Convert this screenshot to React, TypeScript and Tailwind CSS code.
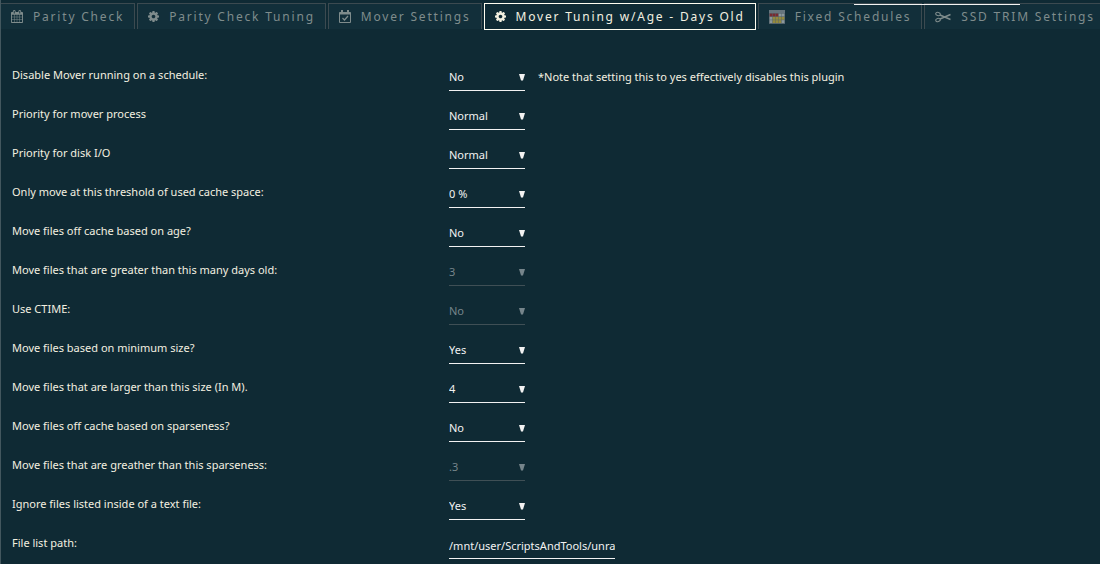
import React from "react";

const cogPath =
  "M1024 896q0-106-75-181t-181-75-181 75-75 181 75 181 181 75 181-75 75-181zm512-109v222q0 12-8 23t-20 13l-185 28q-19 54-39 91 35 50 107 138 10 12 10 25t-9 23q-27 37-99 108t-94 71q-12 0-26-9l-138-108q-44 23-91 38-16 136-29 186-7 28-36 28h-222q-14 0-24.5-8.5t-11.5-21.5l-28-184q-49-16-90-37l-141 107q-10 9-25 9-14 0-25-11-126-114-165-168-7-10-7-23 0-12 8-23 15-21 51-66.5t54-70.5q-27-50-41-99l-183-27q-13-2-21-12.5t-8-23.5v-222q0-12 8-23t19-13l186-28q14-46 39-92-40-57-107-138-10-12-10-24 0-10 9-23 26-36 98.5-107.5t94.5-71.5q13 0 26 10l138 107q44-23 91-38 16-136 29-186 7-28 36-28h222q14 0 24.5 8.5t11.5 21.5l28 184q49 16 90 37l142-107q9-9 24-9 13 0 25 10 129 119 165 170 7 8 7 22 0 12-8 23-15 21-51 66.5t-54 70.5q26 50 41 98l183 28q13 2 21 12.5t8 23.5z";
const calendarPath =
  "M192 1664h288v-288h-288v288zm352 0h320v-288h-320v288zm-352-352h288v-320h-288v320zm352 0h320v-320h-320v320zm-352-384h288v-288h-288v288zm736 736h320v-288h-320v288zm-384-736h320v-288h-320v288zm768 736h288v-288h-288v288zm-384-352h320v-320h-320v320zm-352-864v-288q0-13-9.5-22.5t-22.5-9.5h-64q-13 0-22.5 9.5t-9.5 22.5v288q0 13 9.5 22.5t22.5 9.5h64q13 0 22.5-9.5t9.5-22.5zm736 864h288v-320h-288v320zm-384-384h320v-288h-320v288zm384 0h288v-288h-288v288zm32-480v-288q0-13-9.5-22.5t-22.5-9.5h-64q-13 0-22.5 9.5t-9.5 22.5v288q0 13 9.5 22.5t22.5 9.5h64q13 0 22.5-9.5t9.5-22.5zm384-64v1280q0 52-38 90t-90 38h-1408q-52 0-90-38t-38-90v-1280q0-52 38-90t90-38h128v-96q0-66 47-113t113-47h64q66 0 113 47t47 113v96h384v-96q0-66 47-113t113-47h64q66 0 113 47t47 113v96h128q52 0 90 38t38 90z";

const Cog = () => (
  <svg viewBox="0 128 1536 1536" className="h-[11px] w-[11px]" fill="currentColor" aria-hidden="true">
    <path d={cogPath} />
  </svg>
);
const Calendar = () => (
  <svg viewBox="64 0 1664 1792" className="h-[13px] w-3" fill="currentColor" aria-hidden="true">
    <path d={calendarPath} />
  </svg>
);
const CalendarCheck = () => (
  <svg viewBox="0 0 12 13" className="h-[13px] w-3" fill="none" stroke="currentColor" aria-hidden="true">
    <path d="M0.500 2.500h11v10h-11z" />
    <path d="M0.500 3.500h11" strokeWidth="2" />
    <path d="M3 0v3M9 0v3" strokeWidth="2" />
    <path d="M3.500 8l2 2 3.500-4" strokeWidth="1.2" />
  </svg>
);

const calendarCells = [
  ["#7a2a30", "#7a2a30", "#7a2a30", "#8b979b", "#8b979b"],
  ["#8b979b", "#948a3c", "#948a3c", "#948a3c", "#948a3c"],
  ["#8b979b", "#948a3c", "#948a3c", "#948a3c", "#8b979b"],
];
const Schedule = () => (
  <svg viewBox="0 0 16 14" className="h-3.5 w-4" aria-hidden="true">
    <rect width="16" height="14" fill="#56656d" />
    <rect width="16" height="3" fill="#66757d" />
    {calendarCells.map((row, y) =>
      row.map((fill, x) => (
        <rect key={`${x}-${y}`} x={x * 3 + 0.7} y={y * 3.3 + 3.6} width="2.600" height="2.800" fill={fill} />
      )),
    )}
  </svg>
);
const Scissors = () => (
  <svg viewBox="0 0 16 12" className="h-3 w-4" fill="none" stroke="currentColor" aria-hidden="true">
    <ellipse cx="3" cy="3" rx="2.3" ry="1.6" strokeWidth="1.1" transform="rotate(15 3 3)" />
    <ellipse cx="3" cy="9" rx="2.3" ry="1.6" strokeWidth="1.1" transform="rotate(-15 3 9)" />
    <path d="M5 4l10.500 4.500M5 8l10.500-4.500" strokeWidth="1.4" />
  </svg>
);

const tabs = [
  { title: "Parity Check", icon: <Calendar /> },
  { title: "Parity Check Tuning", icon: <Cog /> },
  { title: "Mover Settings", icon: <CalendarCheck /> },
  { title: "Mover Tuning w/Age - Days Old", icon: <Cog />, active: true },
  { title: "Fixed Schedules", icon: <Schedule /> },
  { title: "SSD TRIM Settings", icon: <Scissors /> },
];

const settings = [
  { id: "disable", label: "Disable Mover running on a schedule:", value: "No", note: "*Note that setting this to yes effectively disables this plugin" },
  { id: "priority", label: "Priority for mover process", value: "Normal" },
  { id: "io", label: "Priority for disk I/O", value: "Normal" },
  { id: "threshold", label: "Only move at this threshold of used cache space:", value: "0 %" },
  { id: "age", label: "Move files off cache based on age?", value: "No" },
  { id: "days", label: "Move files that are greater than this many days old:", value: "3", disabled: true },
  { id: "ctime", label: "Use CTIME:", value: "No", disabled: true },
  { id: "minsize", label: "Move files based on minimum size?", value: "Yes" },
  { id: "size", label: "Move files that are larger than this size (In M).", value: "4" },
  { id: "sparse", label: "Move files off cache based on sparseness?", value: "No" },
  { id: "sparseness", label: "Move files that are greather than this sparseness:", value: ".3", disabled: true },
  { id: "ignore", label: "Ignore files listed inside of a text file:", value: "Yes" },
];

function Row({ id, label, children }: { id: string; label: string; children: React.ReactNode }) {
  return (
    <div className="flex h-[39px] items-start">
      <label htmlFor={id} className="w-[437px] shrink-0 pt-[3px] leading-4">
        {label}
      </label>
      {children}
    </div>
  );
}

export default function App() {
  return (
    <div className="relative min-h-screen overflow-hidden border-l border-[#43575e] bg-[#0f2a34] pt-[3px] font-['Noto_Sans','Liberation_Sans',sans-serif] text-[11px] text-[#f3f0e0]">
      <div className="absolute top-1 left-[853px] h-px w-[166px] bg-[#f2f2f2]" />
      <div role="tablist" className="-ml-px flex h-[27px] items-start gap-0.5 whitespace-nowrap">
        {tabs.map((tab) => (
          <button
            key={tab.title}
            type="button"
            role="tab"
            aria-selected={!!tab.active}
            className={
              tab.active
                ? "flex h-[27px] shrink-0 items-center gap-2.5 border border-[#fffdf0] px-2.5 text-xs tracking-[0.15em] text-[#f3f0e0]"
                : "flex h-[26px] shrink-0 items-center gap-2.5 border border-b-0 border-[#3c4a50] bg-[#122f3a] px-2.5 text-xs tracking-[0.15em] text-[#7f8c8c]"
            }
          >
            {tab.icon}
            <span>{tab.title}</span>
          </button>
        ))}
      </div>
      <form className="pt-[34px] pl-[11px]">
        {settings.map((s) => (
          <Row key={s.id} id={s.id} label={s.label}>
            <div className={s.disabled ? "relative w-[76px] text-[#76858b]" : "relative w-[76px] text-[#f2f2f2]"}>
              <select
                id={s.id}
                disabled={s.disabled}
                className={
                  s.disabled
                    ? "block h-[27px] w-full appearance-none border-b border-[#3f4f55] bg-transparent opacity-100 outline-none"
                    : "block h-[27px] w-full appearance-none border-b border-[#f2f2f2] bg-transparent outline-none"
                }
              >
                <option>{s.value}</option>
              </select>
              <svg viewBox="0 0 6 7" className="pointer-events-none absolute top-2.5 right-0 h-[7px] w-1.5" fill="currentColor" aria-hidden="true">
                <path d="M0 0h6L4 6.500H2z" />
              </svg>
            </div>
            {s.note && <span className="pt-[5px] pl-[13px] leading-4">{s.note}</span>}
          </Row>
        ))}
        <Row id="path" label="File list path:">
          <input
            id="path"
            type="text"
            defaultValue="/mnt/user/ScriptsAndTools/unraid-mover-ignore.txt"
            className="block h-[27px] w-[166px] border-b border-[#f2f2f2] bg-transparent text-[#f2f2f2] outline-none"
          />
        </Row>
      </form>
    </div>
  );
}
